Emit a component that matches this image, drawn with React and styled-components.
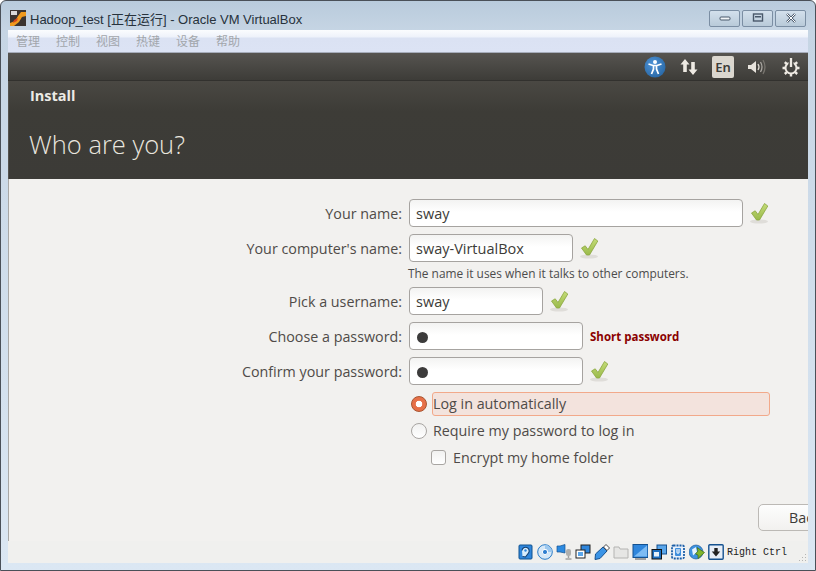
import React from 'react';
import styled, { createGlobalStyle } from 'styled-components';

const Global = createGlobalStyle`
  html, body { margin: 0; padding: 0; background: #fff; }
  body { width: 816px; height: 571px; overflow: hidden; font-family: "Open Sans", "Liberation Sans", sans-serif; }
`;

const Window = styled.div`
  width: 816px;
  height: 571px;
  box-sizing: border-box;
  display: flex;
  flex-direction: column;
  overflow: hidden;
  border: 1px solid #4a5058;
  border-radius: 6px 6px 0 0;
  background: linear-gradient(180deg, #b9cbdc 0%, #c6d5e4 30px, #dbe7f3 100%);
`;

const TitleBar = styled.div`
  height: 29px;
  flex: none;
  box-sizing: border-box;
  display: flex;
  align-items: center;
  padding: 5px 9px 0 9px;
  gap: 4px;
`;

const Title = styled.div`
  flex: 1;
  font: 13px "Liberation Sans", "Noto Sans CJK SC", sans-serif;
  color: #27323c;
`;

const WinButtons = styled.div`
  display: flex;
  gap: 2px;
`;

const WinButton = styled.div`
  width: 29px;
  height: 15px;
  border: 1px solid #7b8ea3;
  border-radius: 2px;
  background: linear-gradient(180deg, #d3e0ec, #b9cad9);
  display: flex;
  align-items: center;
  justify-content: center;
`;

const Inner = styled.div`
  flex: 1;
  min-height: 0;
  margin: 0 7px;
  display: flex;
  flex-direction: column;
`;

const MenuBar = styled.div`
  height: 23px;
  flex: none;
  display: flex;
  gap: 16px;
  padding: 0 0 2px 8px;
  align-items: center;
  box-sizing: border-box;
  background: linear-gradient(180deg, #fbfcfe 0, #eef2fa 7px, #dbe2f3 8px, #dce3f4 100%);
  border-bottom: 1px solid #a6acba;
  font: 12px "Noto Sans CJK SC", sans-serif;
  color: #a2a6ab;
`;

const Panel = styled.div`
  height: 28px;
  flex: none;
  box-sizing: border-box;
  display: flex;
  justify-content: flex-end;
  align-items: center;
  background: linear-gradient(180deg, #565450, #3d3c38);
  border-bottom: 1px solid #32312e;
`;

const PanelSlot = styled.div`
  width: 34px;
  height: 28px;
  display: flex;
  align-items: center;
  justify-content: center;
`;

const LangBadge = styled.div`
  width: 22px;
  height: 22px;
  border-radius: 2px;
  background: #dbd7cf;
  color: #3c3b37;
  font: 600 13px "Noto Sans", sans-serif;
  display: flex;
  align-items: center;
  justify-content: center;
`;

const Header = styled.div`
  height: 98px;
  flex: none;
  box-sizing: border-box;
  background: linear-gradient(180deg, #4a4843 0, #3d3c37 30px, #3c3b37 100%);
  box-shadow: inset 1px 0 #55534f;
  color: #f0ede8;
`;

const Step = styled.div`
  font: 700 14.5px/16px "Open Sans", sans-serif;
  padding: 7px 0 0 22px;
  color: #ecebe6;
`;

const Heading = styled.div`
  font: 300 25.5px/32px "Open Sans", sans-serif;
  padding: 24px 0 0 21px;
  color: #e9e6df;
`;

const Form = styled.div`
  flex: 1;
  min-height: 0;
  position: relative;
  overflow: hidden;
  background: #f2f1ef;
  box-shadow: inset 1px 0 #a9a8a6;
  color: #4c4c4c;
  font-size: 14.3px;
  padding-top: 20px;
  display: flex;
  flex-direction: column;
`;

const Row = styled.div`
  display: flex;
  align-items: center;
  height: 28px;
  margin-bottom: ${p => p.$mb ?? 7}px;
`;

const Label = styled.div`
  width: 394px;
  text-align: right;
  white-space: nowrap;
  color: #4f4b48;
  flex: none;
`;

const Field = styled.div`
  width: ${p => p.$w}px;
  height: 26px;
  margin-left: 7px;
  flex: none;
  box-sizing: content-box;
  border: 1px solid #a6a3a0;
  border-radius: 4px;
  background: linear-gradient(180deg, #f3f3f2 0, #fff 12px);
  display: flex;
  align-items: center;
  padding-left: 6px;
  font-size: 14.5px;
  color: #3c3b37;
`;

const Dot = styled.span`
  width: 11px;
  height: 11px;
  border-radius: 50%;
  background: #3c3b3b;
  margin: 2px 0 0 1px;
`;

const Check = styled.svg`
  width: 20px;
  height: 22px;
  margin-left: 6px;
  flex: none;
`;

const Hint = styled.div`
  font-size: 11.9px;
  line-height: 16px;
  margin: -4px 0 6px 400px;
  color: #4c4c4c;
  white-space: nowrap;
`;

const ErrorText = styled.div`
  font: 700 11.5px "Open Sans", sans-serif;
  color: #8b0000;
  margin-left: 7px;
  white-space: nowrap;
`;

const OptionRow = styled.div`
  display: flex;
  align-items: center;
  height: 27px;
  padding-left: ${p => p.$indent}px;
  color: #4f4b48;
  white-space: nowrap;
`;

const Radio = styled.span`
  width: 14px;
  height: 14px;
  flex: none;
  border-radius: 50%;
  box-sizing: content-box;
  border: 1px solid ${p => (p.$on ? '#a9542f' : '#a8a5a2')};
  background: ${p => (p.$on ? 'radial-gradient(circle, #fff 0 3px, #e67048 3.6px)' : 'linear-gradient(180deg, #f1f1f0, #fff)')};
`;

const Box = styled.span`
  width: 13px;
  height: 13px;
  flex: none;
  border: 1px solid #a8a5a2;
  border-radius: 3px;
  background: linear-gradient(180deg, #f1f1f0, #fff);
`;

const OptionLabel = styled.div`
  margin-left: ${p => p.$gap}px;
  ${p => p.$focus && `
    width: 336px;
    height: 22px;
    line-height: 22px;
    background: #f3e3dd;
    border: 1px solid #f2a98a;
    border-radius: 3px;
    margin-left: 5px;
    box-sizing: content-box;
  `}
`;

const BackButton = styled.div`
  position: absolute;
  left: 750px;
  top: 325px;
  width: 90px;
  height: 25px;
  border: 1px solid #bcb9b5;
  border-radius: 5px;
  background: linear-gradient(180deg, #fdfdfd, #f2f1ef);
  padding-left: 30px;
  line-height: 25px;
  color: #3c3b37;
`;

const StatusBar = styled.div`
  height: 22px;
  flex: none;
  position: relative;
  display: flex;
  align-items: center;
  justify-content: flex-end;
  background: #f0f0ee;
  padding-right: 21px;
  gap: 3px;
`;

const HostKey = styled.div`
  font: 10px "Liberation Mono", "DejaVu Sans Mono", monospace;
  color: #222;
`;

const Grip = styled.svg`
  position: absolute;
  right: 1px;
  bottom: 1px;
`;

const Bottom = styled.div`
  height: 7px;
  flex: none;
`;

function GreenCheck() {
  return (
    <Check viewBox="0 0 20 22">
      <defs>
        <linearGradient id="chk" x1="0" y1="0" x2="0" y2="1">
          <stop offset="0" stopColor="#c4dc78" />
          <stop offset="1" stopColor="#9aba4a" />
        </linearGradient>
      </defs>
      <ellipse cx="10" cy="19.5" rx="9" ry="2" fill="#dfddd9" />
      <path d="M2.5 11 L6.2 8.8 L9 12.5 L15.5 1.5 L18.8 4 L10.5 18 L7.5 18 Z" fill="url(#chk)" stroke="#8aa63f" strokeWidth="0.8" strokeLinejoin="round" />
    </Check>
  );
}

function MiniIcon({ children }) {
  return <svg width="16" height="16" viewBox="0 0 16 16">{children}</svg>;
}

const statusIcons = [
  <><rect x="1" y="1" width="13" height="14" rx="1" fill="#2f86dc" stroke="#10528f" /><path d="M4 6.5 A3.6 3.6 0 1 1 10.5 9 L7.5 13 L4.5 12.5" fill="#d8ecfb" stroke="#123f70" strokeWidth="1.1" /><circle cx="7.5" cy="6.5" r="1.2" fill="#2f86dc" /></>,
  <><circle cx="8" cy="8" r="7.3" fill="#d6e8f7" stroke="#2a7cc7" /><path d="M8 1 A7 7 0 0 1 15 8 H11 A3 3 0 0 0 8 5 Z" fill="#9cc8ef" /><circle cx="8" cy="8" r="2.6" fill="#2f7fd0" stroke="#fff" /></>,
  <><path d="M1 2 L4 2 L9 0.5 V9 L4 8 L1 8 Z" fill="#2c8ae0" stroke="#14518f" strokeWidth="0.7" /><rect x="10" y="5" width="5" height="7" rx="2" fill="#b0b0ae" /><path d="M12.5 12 V14 M9.5 15 H15.5" stroke="#a3a3a1" strokeWidth="1.5" /></>,
  <><rect x="6" y="1" width="9" height="8" fill="#2f86dc" stroke="#222" /><rect x="1" y="6" width="9" height="8" fill="#fff" stroke="#222" /><rect x="3" y="8" width="5" height="4" fill="#5aa6ea" /></>,
  <><path d="M1 15.5 L1.5 10 L9 3 L13 7 L6 14.5 Z" fill="#3b94e6" stroke="#15508f" /><path d="M9.5 3 L12 0.5 L15.5 4 L13 6.5 Z" fill="#fff" stroke="#222" strokeWidth="0.8" /></>,
  <><path d="M1 5 V3 H6 L7 5 H15 V14 H1 Z" fill="#e6e6e4" stroke="#b4b4b2" /></>,
  <><rect x="1" y="0.5" width="15" height="13" fill="#2f86dc" stroke="#14518f" /><path d="M2 12.5 L15 1.5 V12.5 Z" fill="#7dbcf4" /><path d="M3 15 H14" stroke="#8a8a88" strokeWidth="1.5" /></>,
  <><rect x="6" y="1" width="9.5" height="9" fill="#5aa6ea" stroke="#14518f" /><rect x="1" y="5.5" width="9.5" height="9.5" fill="#1d6fc0" stroke="#111" /><rect x="3" y="8" width="5" height="4.5" fill="#e6f1fb" /></>,
  <><rect x="2" y="1.5" width="12" height="13" rx="1.5" fill="#e9f1fb" stroke="#1c5fa8" strokeWidth="1.8" strokeDasharray="2 1" /><rect x="5" y="4" width="6" height="8" rx="1" fill="#3f8fdd" /><path d="M7 5 V8.5 Q8 10 9 8.5 V5" fill="none" stroke="#fff" strokeWidth="1.1" /></>,
  <><circle cx="7" cy="8" r="7" fill="#3d92e0" stroke="#14518f" strokeWidth="0.6" /><path d="M3 5.5 L7 3 L8 8 L4 11.5 Z" fill="#e6f3fd" /><path d="M8 3.5 L15.5 8.5 L9 14.5 L9 11 L6.5 10 L9 7 Z" fill="#7fb52c" stroke="#3f6a12" strokeWidth="0.7" /></>,
  <><rect x="0.8" y="0.8" width="14.4" height="14.4" rx="1" fill="#e7eef7" stroke="#14518f" strokeWidth="1.4" /><path d="M8 12.5 L3.8 7.5 H6.3 V4 H9.7 V7.5 H12.2 Z" fill="#222" /></>,
];

export default function App() {
  return (
    <Window>
      <Global />
      <TitleBar>
        <svg width="16" height="16" viewBox="0 0 16 16">
          <rect width="16" height="16" fill="#3a3430" />
          <path d="M0 16 V13 L5 11 L8 6 L11 2 H16 V6 L12 7 L9 12 L4 16 Z" fill="#ef9a1e" />
          <path d="M4 10 L8 8 L7 11 L3 13 Z" fill="#d9481c" />
          <rect x="1" y="1" width="6" height="4" fill="#d9d9d9" />
        </svg>
        <Title>Hadoop_test [正在运行] - Oracle VM VirtualBox</Title>
        <WinButtons>
          <WinButton>
            <svg width="12" height="8" viewBox="0 0 12 8"><rect x="1" y="3" width="10" height="3" rx="1" fill="#f2f5f8" stroke="#49586a" /></svg>
          </WinButton>
          <WinButton>
            <svg width="12" height="10" viewBox="0 0 12 10"><rect x="1.5" y="1" width="9" height="7" fill="none" stroke="#49586a" strokeWidth="1.4" /><rect x="3" y="3" width="6" height="1.5" fill="#49586a" /></svg>
          </WinButton>
          <WinButton>
            <svg width="12" height="10" viewBox="0 0 12 10"><path d="M2 1 L10 9 M10 1 L2 9" stroke="#49586a" strokeWidth="2.4" /><path d="M2 1 L10 9 M10 1 L2 9" stroke="#fff" strokeWidth="1" /></svg>
          </WinButton>
        </WinButtons>
      </TitleBar>
      <Inner>
        <MenuBar>
          {['管理', '控制', '视图', '热键', '设备', '帮助'].map(m => <span key={m}>{m}</span>)}
        </MenuBar>
        <Panel>
          <PanelSlot>
            <svg width="22" height="22" viewBox="0 0 22 22">
              <defs>
                <radialGradient id="a11y" cx="0.4" cy="0.35" r="0.8">
                  <stop offset="0" stopColor="#4f93d6" />
                  <stop offset="1" stopColor="#23629f" />
                </radialGradient>
              </defs>
              <circle cx="11" cy="11" r="10.5" fill="url(#a11y)" />
              <circle cx="11" cy="6" r="2" fill="#fff" />
              <path d="M4.5 8 L9 9.5 H13 L17.5 8 M9.5 9.5 V13 L7.5 18 M12.5 9.5 V13 L14.5 18" fill="none" stroke="#fff" strokeWidth="1.7" />
            </svg>
          </PanelSlot>
          <PanelSlot>
            <svg width="18" height="18" viewBox="0 0 18 18">
              <path d="M5 1 L9.5 6.5 H6.8 V14 H3.2 V6.5 H0.5 Z M13 17 L8.5 11.5 H11.2 V4 H14.8 V11.5 H17.5 Z" fill="#eeeae3" />
            </svg>
          </PanelSlot>
          <PanelSlot><LangBadge>En</LangBadge></PanelSlot>
          <PanelSlot>
            <svg width="20" height="18" viewBox="0 0 20 18">
              <path d="M1 7 H4 L9 3 V15 L4 11 H1 Z" fill="#e8e4dd" />
              <path d="M11 6 Q13 9 11 12" fill="none" stroke="#dedad3" strokeWidth="1.3" />
              <path d="M13.5 4 Q16.5 9 13.5 14" fill="none" stroke="#aaa7a1" strokeWidth="1.3" />
              <path d="M16 2 Q20 9 16 16" fill="none" stroke="#77746e" strokeWidth="1.3" />
            </svg>
          </PanelSlot>
          <PanelSlot>
            <svg width="20" height="20" viewBox="0 0 20 20">
              <circle cx="10" cy="11" r="5.5" fill="none" stroke="#eeeae3" strokeWidth="2" />
              <path d="M10 1.5 V10" stroke="#3f3e3a" strokeWidth="5" />
              <path d="M10 1 V10" stroke="#eeeae3" strokeWidth="2.4" />
              <path d="M1.5 11 H4 M16 11 H18.5 M3.8 5.2 L5.8 7 M16.2 5.2 L14.2 7 M3.8 17 L5.8 15.2 M16.2 17 L14.2 15.2 M10 17 V19.5" stroke="#eeeae3" strokeWidth="2.4" />
            </svg>
          </PanelSlot>
        </Panel>
        <Header>
          <Step>Install</Step>
          <Heading>Who are you?</Heading>
        </Header>
        <Form>
          <Row>
            <Label>Your name:</Label>
            <Field $w={326}>sway</Field>
            <GreenCheck />
          </Row>
          <Row>
            <Label>Your computer's name:</Label>
            <Field $w={156}>sway-VirtualBox</Field>
            <GreenCheck />
          </Row>
          <Hint>The name it uses when it talks to other computers.</Hint>
          <Row>
            <Label>Pick a username:</Label>
            <Field $w={126}>sway</Field>
            <GreenCheck />
          </Row>
          <Row>
            <Label>Choose a password:</Label>
            <Field $w={166}><Dot /></Field>
            <ErrorText>Short password</ErrorText>
          </Row>
          <Row $mb={5}>
            <Label>Confirm your password:</Label>
            <Field $w={166}><Dot /></Field>
            <GreenCheck />
          </Row>
          <OptionRow $indent={403}>
            <Radio $on />
            <OptionLabel $focus>Log in automatically</OptionLabel>
          </OptionRow>
          <OptionRow $indent={403}>
            <Radio />
            <OptionLabel $gap={6}>Require my password to log in</OptionLabel>
          </OptionRow>
          <OptionRow $indent={423}>
            <Box />
            <OptionLabel $gap={7}>Encrypt my home folder</OptionLabel>
          </OptionRow>
          <BackButton>Back</BackButton>
        </Form>
        <StatusBar>
          {statusIcons.map((icon, i) => <MiniIcon key={i}>{icon}</MiniIcon>)}
          <HostKey>Right Ctrl</HostKey>
          <Grip width="10" height="10" viewBox="0 0 10 10">
            <path d="M8 2 h1 v1 h-1 Z M5 5 h1 v1 h-1 Z M8 5 h1 v1 h-1 Z M2 8 h1 v1 h-1 Z M5 8 h1 v1 h-1 Z M8 8 h1 v1 h-1 Z" fill="#b5b5b3" />
          </Grip>
        </StatusBar>
      </Inner>
      <Bottom />
    </Window>
  );
}
